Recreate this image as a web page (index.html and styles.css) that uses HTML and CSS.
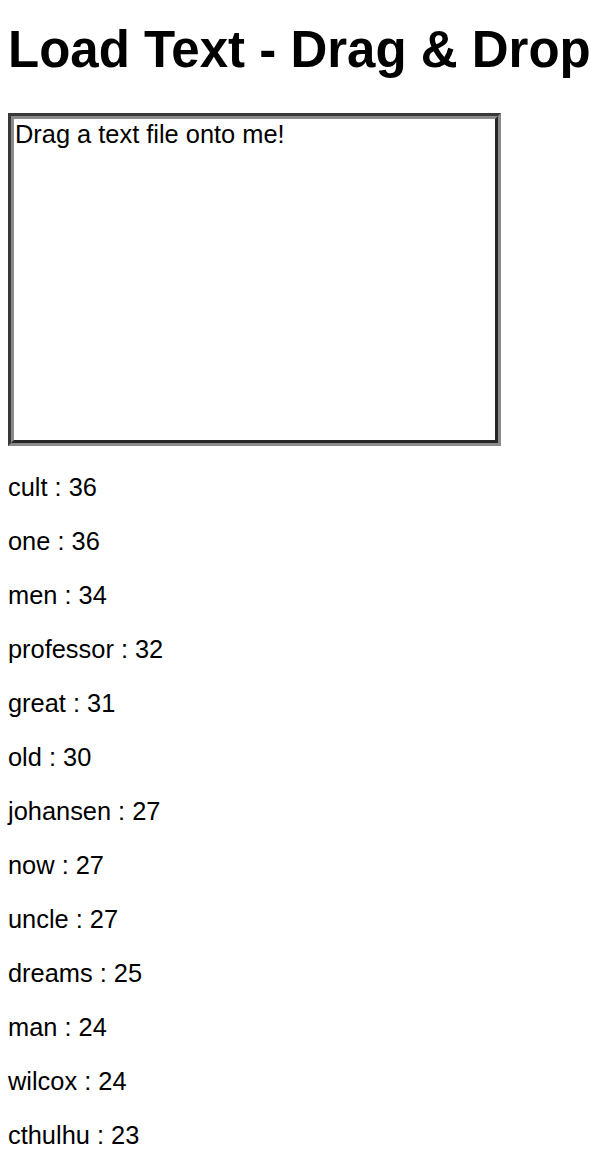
FILE: index.html
```html
<!DOCTYPE html>
<html>
<head>
<meta charset="utf-8">
<title>Load Text - Drag &amp; Drop</title>
<link rel="stylesheet" href="styles.css">
</head>
<body>
<h1 class="title">Load Text - Drag &amp; Drop</h1>
<div class="drop-outer">
  <div class="drop-inner">Drag a text file onto me!</div>
</div>
<div class="words">
  <p class="word">cult : 36</p>
  <p class="word">one : 36</p>
  <p class="word">men : 34</p>
  <p class="word">professor : 32</p>
  <p class="word">great : 31</p>
  <p class="word">old : 30</p>
  <p class="word">johansen : 27</p>
  <p class="word">now : 27</p>
  <p class="word">uncle : 27</p>
  <p class="word">dreams : 25</p>
  <p class="word">man : 24</p>
  <p class="word">wilcox : 24</p>
  <p class="word">cthulhu : 23</p>
</div>
</body>
</html>
```

FILE: styles.css
```css
html, body {
  background: #ffffff;
}
body {
  margin: 0;
  padding: 8px;
  font-family: "Liberation Sans", Arial, Helvetica, sans-serif;
  color: #000;
}
.title {
  font-size: 51px;
  line-height: 57px;
  font-weight: bold;
  margin: 13px 0 35px 0;
  white-space: nowrap;
}
.drop-outer {
  box-sizing: border-box;
  width: 493px;
  height: 333px;
  border-style: solid;
  border-width: 3px;
  border-color: #383838 #8a8a8a #8a8a8a #383838;
}
.drop-inner {
  box-sizing: border-box;
  height: 100%;
  border-style: solid;
  border-width: 3px;
  border-color: #8a8a8a #262626 #262626 #8a8a8a;
  font-size: 25.4px;
  line-height: 30px;
  padding-left: 1px;
  background: #fff;
}
.words {
  display: flex;
  flex-direction: column;
  padding-top: 2px;
}
.word {
  font-size: 25.4px;
  margin: 25px 0 0 0;
}
```
